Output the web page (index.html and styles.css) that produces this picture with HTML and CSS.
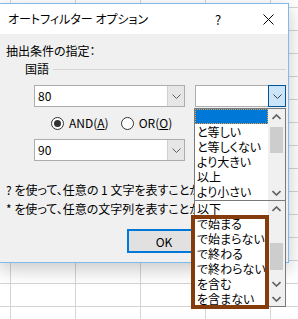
FILE: index.html
```html
<!DOCTYPE html>
<html lang="ja">
<head>
    <meta charset="UTF-8">
    <title>オートフィルター オプション</title>
    <link rel="stylesheet" href="styles.css">
</head>
<body>
    <div class="sheet">
        <div class="dialog">
            <div class="titlebar">
                <span class="title">オートフィルター オプション</span>
                <span class="help">?</span>
                <span class="close">
                    <svg width="11" height="11" viewBox="0 0 11 11"><path d="M0.5 0.5 L10.5 10.5 M10.5 0.5 L0.5 10.5" stroke="#000" stroke-width="1" fill="none"/></svg>
                </span>
            </div>
            <div class="content">
                <div class="label">抽出条件の指定：</div>
                <div class="group">
                    <span>国語</span>
                    <span class="rule"></span>
                </div>

                <div class="row">
                    <div class="combo combo-op">
                        <span class="combo-text">80</span>
                        <span class="combo-btn">
                            <svg width="9" height="5" viewBox="0 0 9 5"><path d="M0.5 0.5 L4.5 4.5 L8.5 0.5" stroke="#606060" fill="none"/></svg>
                        </span>
                    </div>
                    <div class="combo combo-val">
                        <span class="combo-text"></span>
                        <span class="combo-btn active">
                            <svg width="9" height="5" viewBox="0 0 9 5"><path d="M0.5 0.5 L4.5 4.5 L8.5 0.5" stroke="#404040" fill="none"/></svg>
                        </span>
                    </div>
                </div>

                <div class="radios">
                    <label class="radio"><span class="dot checked"></span><span>AND(<u>A</u>)</span></label>
                    <label class="radio"><span class="dot"></span><span>OR(<u>O</u>)</span></label>
                </div>

                <div class="row">
                    <div class="combo combo-op">
                        <span class="combo-text">90</span>
                        <span class="combo-btn">
                            <svg width="9" height="5" viewBox="0 0 9 5"><path d="M0.5 0.5 L4.5 4.5 L8.5 0.5" stroke="#606060" fill="none"/></svg>
                        </span>
                    </div>
                    <div class="combo combo-val">
                        <span class="combo-text"></span>
                        <span class="combo-btn"></span>
                    </div>
                </div>

                <!-- the rest of these lines is hidden under the open list -->
                <div class="hints">
                    <div>? を使って、任意の 1 文字を表すことが</div>
                    <div>* を使って、任意の文字列を表すことが</div>
                </div>

                <div class="buttons">
                    <button class="btn btn-default">OK</button>
                </div>
            </div>
        </div>

        <!-- open dropdown, upper part of the list -->
        <div class="dropdown list-top">
            <div class="items">
                <div class="item selected"></div>
                <div class="item">と等しい</div>
                <div class="item">と等しくない</div>
                <div class="item">より大きい</div>
                <div class="item">以上</div>
                <div class="item">より小さい</div>
            </div>
            <div class="scroll">
                <span class="arrow"><svg width="9" height="6" viewBox="0 0 9 6"><path d="M0.5 5 L4.5 1 L8.5 5" stroke="#606060" stroke-width="1.6" fill="none"/></svg></span>
                <span class="thumb thumb-top"></span>
                <span class="fill"></span>
                <span class="arrow"><svg width="9" height="6" viewBox="0 0 9 6"><path d="M0.5 1 L4.5 5 L8.5 1" stroke="#606060" stroke-width="1.6" fill="none"/></svg></span>
            </div>
        </div>

        <!-- same list scrolled down -->
        <div class="dropdown list-bottom">
            <div class="items">
                <div class="item">以下</div>
                <div class="item">で始まる</div>
                <div class="item">で始まらない</div>
                <div class="item">で終わる</div>
                <div class="item">で終わらない</div>
                <div class="item">を含む</div>
                <div class="item">を含まない</div>
            </div>
            <div class="scroll">
                <span class="arrow"><svg width="9" height="6" viewBox="0 0 9 6"><path d="M0.5 5 L4.5 1 L8.5 5" stroke="#606060" stroke-width="1.6" fill="none"/></svg></span>
                <span class="thumb thumb-bottom"></span>
                <span class="fill"></span>
                <span class="arrow"><svg width="9" height="6" viewBox="0 0 9 6"><path d="M0.5 1 L4.5 5 L8.5 1" stroke="#606060" stroke-width="1.6" fill="none"/></svg></span>
                <span class="arrow"><svg width="9" height="6" viewBox="0 0 9 6"><path d="M0.5 1 L4.5 5 L8.5 1" stroke="#606060" stroke-width="1.6" fill="none"/></svg></span>
            </div>
        </div>

        <div class="mark"></div>
    </div>
</body>
</html>
```

FILE: styles.css
```css
/* Page + spreadsheet grid behind the dialog */
body {
    margin: 0;
    font-family: "Noto Sans CJK JP", "Noto Sans", sans-serif;
    font-size: 12px;
    font-feature-settings: "palt";
    color: #000;
}

.sheet {
    position: relative;
    width: 298px;
    height: 319px;
    overflow: hidden;
    background-color: #fff;
    background-image:
        repeating-linear-gradient(to right, transparent 0, transparent 10px, #d4d4d4 10px, #d4d4d4 11px, transparent 11px, transparent 65px),
        repeating-linear-gradient(to bottom, transparent 0, transparent 7px, #d4d4d4 7px, #d4d4d4 8px, transparent 8px, transparent 23px);
}

/* Dialog window */
.dialog {
    box-sizing: border-box;
    width: 290px;
    height: 260px;
    margin: 3px 0 0 -1px;
    border: 1px solid #80b9ee;
    background-color: #f0f0f0;
    box-shadow: 0 6px 18px rgba(0, 0, 0, 0.22);
    display: flex;
    flex-direction: column;
}

.titlebar {
    height: 30px;
    background-color: #fff;
    display: flex;
    align-items: center;
    padding-left: 8px;
}

.title {
    flex: 1;
    line-height: 16px;
}

.help {
    width: 12px;
    margin-right: 36px;
    font-size: 13px;
}

.close {
    width: 11px;
    height: 11px;
    margin-right: 14px;
    display: flex;
}

.content {
    flex: 1;
    padding: 9px 0 0 6px;
    line-height: 16px;
}

.group {
    display: flex;
    align-items: center;
    gap: 4px;
    margin-top: 2px;
    padding-left: 19px;
}

.rule {
    flex: 1;
    height: 1px;
    margin-right: 2px;
    background-color: #d5d5d5;
}

/* Rows of combo boxes */
.row {
    display: flex;
    gap: 10px;
    margin-top: 8px;
    padding-left: 28px;
}

.combo {
    box-sizing: border-box;
    height: 22px;
    display: flex;
    border: 1px solid #adadad;
    background-color: #fff;
}

.combo-op {
    width: 151px;
}

.combo-val {
    width: 91px;
}

.combo-text {
    flex: 1;
    padding-left: 3px;
    line-height: 20px;
}

.combo-btn {
    box-sizing: border-box;
    width: 17px;
    display: flex;
    align-items: center;
    justify-content: center;
    background-color: #e6e6e6;
    border-left: 1px solid #d0d0d0;
}

.combo-btn.active {
    width: 18px;
    margin: -1px -1px -1px 0;
    height: 22px;
    background-color: #cce4f7;
    border: 1px solid #005499;
}

/* Radio buttons */
.radios {
    display: flex;
    gap: 12px;
    margin-top: 8px;
    padding-left: 45px;
}

.radio {
    display: flex;
    align-items: center;
    gap: 5px;
}

.dot {
    box-sizing: border-box;
    width: 13px;
    height: 13px;
    border: 1px solid #333;
    border-radius: 50%;
    background-color: #fff;
    display: flex;
    align-items: center;
    justify-content: center;
}

.dot.checked::after {
    content: '';
    width: 7px;
    height: 7px;
    border-radius: 50%;
    background-color: #333;
}

.hints {
    width: 188px;
    margin-top: 19px;
    line-height: 19px;
    white-space: nowrap;
    overflow: hidden;
}

/* Dialog buttons */
.buttons {
    display: flex;
    gap: 8px;
    margin-top: 11px;
    padding-left: 121px;
}

.btn {
    box-sizing: border-box;
    width: 74px;
    height: 24px;
    border: 1px solid #adadad;
    background-color: #e1e1e1;
    font-family: inherit;
    font-size: 12px;
    font-feature-settings: "palt";
    padding: 0;
}

.btn-default {
    border: 2px solid #0078d7;
}

/* Open dropdown lists (lie over the dialog) */
.dropdown {
    position: absolute;
    left: 194px;
    width: 92px;
    box-sizing: border-box;
    display: flex;
    background-color: #fff;
    border: 1px solid #7a7a7a;
}

.list-top {
    top: 108px;
    height: 93px;
}

.list-bottom {
    top: 200px;
    height: 107px;
}

.items {
    flex: 1;
    line-height: 15px;
    white-space: nowrap;
    overflow: hidden;
}

.item {
    height: 15px;
    padding-left: 2px;
}

.item.selected {
    box-sizing: border-box;
    background-color: #0078d7;
    border: 1px dotted #e9a23b;
}

.scroll {
    width: 17px;
    display: flex;
    flex-direction: column;
    background-color: #f0f0f0;
}

.arrow {
    height: 15px;
    flex-shrink: 0;
    display: flex;
    align-items: center;
    justify-content: center;
}

.thumb {
    flex-shrink: 0;
    margin: 0 2px;
    background-color: #cdcdcd;
}

.thumb-top {
    height: 26px;
    margin-top: 3px;
}

.thumb-bottom {
    height: 27px;
    margin-top: 27px;
}

.fill {
    flex: 1;
}

/* Highlight frame drawn on the screenshot */
.mark {
    position: absolute;
    left: 191px;
    top: 215px;
    width: 70px;
    height: 86px;
    border: 4px solid #843c0c;
}
```
